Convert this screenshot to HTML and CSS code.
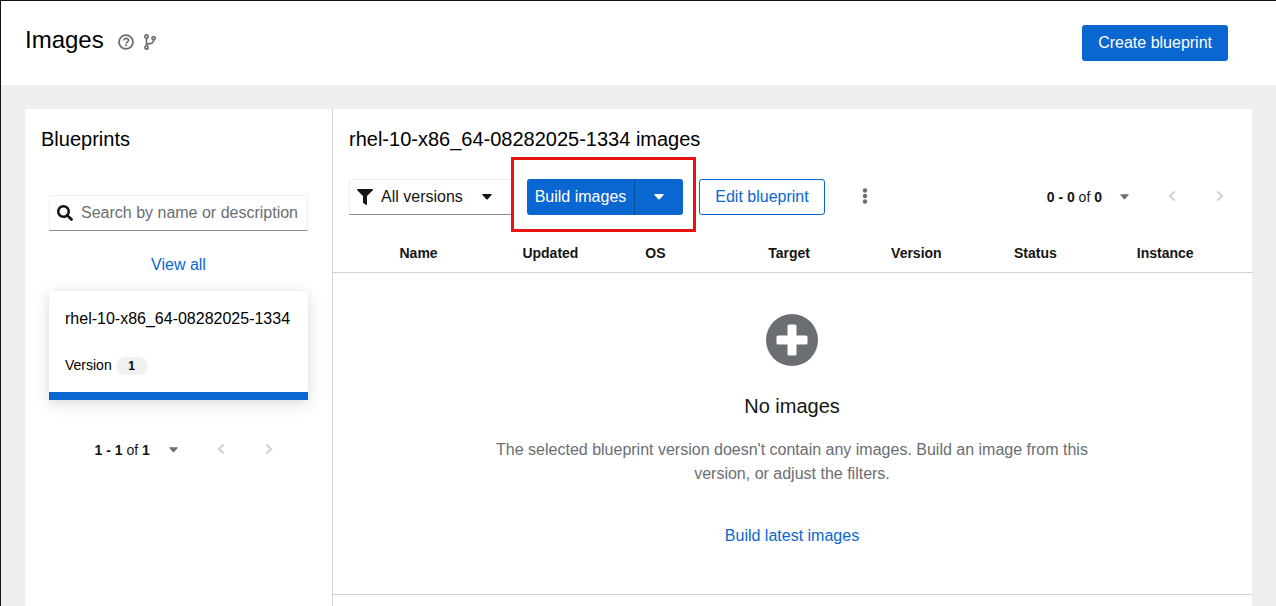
FILE: index.html
```html
<!DOCTYPE html>
<html lang="en">
<head>
<meta charset="utf-8">
<title>Images</title>
<link rel="stylesheet" href="styles.css">
</head>
<body>
<header class="page-header">
  <h1 class="page-title">Images</h1>
  <svg class="help-icon" viewBox="0 0 512 512"><circle cx="256" cy="256" r="223" fill="none" stroke="currentColor" stroke-width="56"/><path d="M182 204c12-48 44-64 76-64 42 0 76 26 76 64 0 54-72 48-74 98" fill="none" stroke="currentColor" stroke-width="52"/><circle cx="258" cy="360" r="36" fill="currentColor"/></svg>
  <svg class="branch-icon" viewBox="0 0 12 16" fill="none" stroke="currentColor" stroke-width="1.7"><circle cx="2.5" cy="2.4" r="1.6"/><circle cx="2.5" cy="13.6" r="1.6"/><circle cx="9.6" cy="4.2" r="1.6"/><path d="M2.5 4v8M9.6 6c0 3.2-1.7 3.3-4 3.700-1.800.3-3.100.9-3.100 2.300"/></svg>
  <button class="btn primary create">Create blueprint</button>
</header>
<div class="content">
  <aside class="sidebar">
    <h2 class="section-title">Blueprints</h2>
    <div class="search">
      <svg class="search-icon" viewBox="0 0 512 512"><path fill="currentColor" d="M505 442.700L405.300 343c-4.500-4.500-10.600-7-17-7H372c27.600-35.300 44-79.700 44-128C416 93.100 322.900 0 208 0S0 93.100 0 208s93.100 208 208 208c48.300 0 92.700-16.400 128-44v16.300c0 6.400 2.500 12.500 7 17l99.700 99.700c9.400 9.400 24.600 9.400 33.900 0l28.300-28.300c9.400-9.400 9.400-24.600.1-34zM208 336c-70.700 0-128-57.200-128-128 0-70.700 57.200-128 128-128 70.700 0 128 57.200 128 128 0 70.700-57.200 128-128 128z"/></svg>
      <span>Search by name or description</span>
    </div>
    <a class="link view-all">View all</a>
    <div class="card">
      <div class="card-name">rhel-10-x86_64-08282025-1334</div>
      <div class="card-version">Version <span class="badge">1</span></div>
    </div>
    <div class="pager">
      <span><b>1 - 1</b> of <b>1</b></span>
      <svg class="caret" viewBox="0 0 10 6"><path d="M.8 0h8.400q1 0 .3.900L5.700 5.200q-.7.700-1.400 0L.5.900Q-.2 0 .8 0z" fill="currentColor"/></svg>
      <svg class="chevron prev" viewBox="0 0 8 12"><path d="M6.500 1.500L2 6l4.500 4.500" fill="none" stroke="currentColor" stroke-width="2.300"/></svg>
      <svg class="chevron next" viewBox="0 0 8 12"><path d="M1.500 1.500L6 6l-4.500 4.500" fill="none" stroke="currentColor" stroke-width="2.300"/></svg>
    </div>
  </aside>
  <main class="main">
    <h2 class="section-title">rhel-10-x86_64-08282025-1334 images</h2>
    <div class="toolbar">
      <div class="filter">
        <svg class="filter-icon" viewBox="0 0 512 512"><path fill="currentColor" d="M487.976 0H24.028C2.710 0-8.047 25.866 7.058 40.971L192 225.941V432c0 7.831 3.821 15.170 10.237 19.662l80 55.980C298.020 518.690 320 507.493 320 487.980V225.941l184.947-184.970C520.021 25.896 509.338 0 487.976 0z"/></svg>
        <span>All versions</span>
        <svg class="caret" viewBox="0 0 10 6"><path d="M.8 0h8.400q1 0 .3.900L5.700 5.200q-.7.700-1.400 0L.5.900Q-.2 0 .8 0z" fill="currentColor"/></svg>
      </div>
      <div class="highlight">
        <button class="btn primary split-main">Build images</button>
        <button class="btn primary split-toggle" aria-label="Options"><svg class="caret" viewBox="0 0 10 6"><path d="M.8 0h8.400q1 0 .3.900L5.700 5.200q-.7.700-1.400 0L.5.900Q-.2 0 .8 0z" fill="currentColor"/></svg></button>
      </div>
      <button class="btn secondary">Edit blueprint</button>
      <svg class="kebab" viewBox="0 0 6 16" fill="currentColor"><circle cx="3" cy="2.500" r="2.200"/><circle cx="3" cy="8" r="2.200"/><circle cx="3" cy="13.500" r="2.200"/></svg>
      <div class="pager">
        <span><b>0 - 0</b> of <b>0</b></span>
        <svg class="caret" viewBox="0 0 10 6"><path d="M.8 0h8.400q1 0 .3.900L5.700 5.200q-.7.700-1.400 0L.5.900Q-.2 0 .8 0z" fill="currentColor"/></svg>
        <svg class="chevron prev" viewBox="0 0 8 12"><path d="M6.500 1.500L2 6l4.500 4.500" fill="none" stroke="currentColor" stroke-width="2.300"/></svg>
        <svg class="chevron next" viewBox="0 0 8 12"><path d="M1.500 1.500L6 6l-4.500 4.500" fill="none" stroke="currentColor" stroke-width="2.300"/></svg>
      </div>
    </div>
    <div class="table-head">
      <span>Name</span><span>Updated</span><span>OS</span><span>Target</span><span>Version</span><span>Status</span><span>Instance</span>
    </div>
    <section class="empty">
      <svg class="plus-icon" viewBox="0 0 52 52"><circle cx="26" cy="26" r="26" fill="#6a6e73"/><path d="M23 10.500h6q1.500 0 1.500 1.500v9.500H40q1.500 0 1.500 1.500v6q0 1.500-1.500 1.500h-9.500V40q0 1.500-1.500 1.500h-6q-1.500 0-1.500-1.500v-9.500H12q-1.500 0-1.500-1.500v-6q0-1.500 1.500-1.500h9.500V12q0-1.500 1.500-1.500z" fill="#fff"/></svg>
      <h2 class="empty-title">No images</h2>
      <p class="empty-text">The selected blueprint version doesn't contain any images. Build an image from this version, or adjust the filters.</p>
      <a class="link">Build latest images</a>
    </section>
  </main>
</div>
</body>
</html>
```
FILE: styles.css
```css
* { box-sizing: border-box; }
body {
  margin: 0;
  height: 606px;
  overflow: hidden;
  display: flex;
  flex-direction: column;
  border-top: 1px solid #11121a;
  border-left: 1px solid #11121a;
  background: #efefef;
  color: #151515;
  font: 16px/24px "Liberation Sans", Arial, sans-serif;
}
h1, h2, p { margin: 0; font-weight: 400; }
svg { display: block; flex: none; }
.page-header {
  flex: none;
  display: flex;
  align-items: center;
  height: 84px;
  padding: 0 48px 0 24px;
  background: #fff;
}
.page-title { color: #000; font-size: 24px; line-height: 32px; padding-bottom: 6px; }
.help-icon { width: 16px; height: 16px; margin: 0 0 2px 14px; color: #6a6e73; }
.branch-icon { width: 12px; height: 16px; margin: 0 0 2px 10px; color: #6a6e73; }
.btn {
  height: 36px;
  padding: 0 16px;
  border: 0;
  border-radius: 3px;
  font: inherit;
  white-space: nowrap;
}
.primary { background: #0a66d0; color: #fff; }
.secondary { width: 126px; background: #fff; color: #0a66d0; border: 1px solid #0a66d0; padding: 0; }
.create { margin-left: auto; }
.link { color: #0a66d0; }
.content { flex: 1; display: flex; margin: 24px 24px 0; min-height: 0; }
.sidebar {
  width: 308px;
  flex: none;
  display: flex;
  flex-direction: column;
  background: #fff;
  border-right: 1px solid #d2d2d2;
}
.section-title { padding: 16px 16px 0; color: #000; font-size: 20px; line-height: 28px; }
.search {
  display: flex;
  align-items: center;
  gap: 8px;
  height: 36px;
  margin: 42px 24px 0;
  padding-left: 7px;
  border: 1px solid #f0f0f0;
  border-bottom-color: #8a8d90;
  color: #6a6e73;
  white-space: nowrap;
}
.search-icon { width: 16px; height: 16px; color: #151515; }
.view-all { margin-top: 22px; text-align: center; padding-right: 48px; padding-left: 48px; }
.card {
  height: 109px;
  margin: 14px 24px 0;
  padding: 16px 16px 0;
  border-bottom: 8px solid #0a66d0;
  box-shadow: 0 4px 16px rgba(3, 3, 3, .13), 0 0 6px rgba(3, 3, 3, .05);
  color: #000;
  white-space: nowrap;
}
.card-version { display: flex; align-items: center; gap: 4px; margin-top: 22px; font-size: 14px; }
.badge {
  width: 32px;
  height: 18px;
  margin-top: 2px;
  border-radius: 9px;
  background: #f0f0f0;
  font-size: 12px;
  font-weight: 700;
  line-height: 18px;
  text-align: center;
}
.pager { display: flex; align-items: center; font-size: 14px; height: 24px; white-space: nowrap; }
.sidebar .pager { margin: 38px 0 0 69.5px; }
.pager .caret { width: 9px; margin-left: 19px; color: #6a6e73; }
.caret { width: 10px; height: 6px; }
.chevron { width: 8px; height: 12px; margin-bottom: 2px; color: #d2d2d2; }
.prev { margin-left: 39px; }
.next { margin-left: 40px; }
.main { flex: 1; min-width: 0; background: #fff; }
.toolbar { display: flex; align-items: center; height: 78px; margin-top: 5px; }
.filter {
  display: flex;
  align-items: center;
  width: 162px;
  height: 36px;
  margin-left: 16px;
  padding-left: 7px;
  border: 1px solid #f0f0f0;
  border-bottom-color: #8a8d90;
  border-right: 0;
  white-space: nowrap;
}
.filter-icon { width: 16px; height: 16px; margin-right: 8px; }
.filter .caret { margin-left: 19px; }
.highlight {
  display: flex;
  align-items: center;
  width: 185px;
  height: 75px;
  margin-bottom: 5px;
  padding: 5px 0 0 13px;
  border: 3px solid #e81313;
}
.split-main { width: 107px; padding: 0; border-radius: 3px 0 0 3px; }
.split-toggle {
  display: flex;
  align-items: center;
  justify-content: center;
  width: 49px;
  padding: 0;
  border-left: 1px solid #004d99;
  border-radius: 0 3px 3px 0;
}
.toolbar .secondary { margin-left: 3px; }
.kebab { width: 6px; height: 16px; margin: 0 0 2px 37px; color: #6a6e73; }
.toolbar .pager { margin: 0 28px 0 auto; }
.toolbar .pager .caret { margin-left: 18px; }
.table-head {
  display: grid;
  grid-template-columns: repeat(7, 122.9px);
  height: 37px;
  margin-right: -1px;
  padding-left: 66.5px;
  overflow: hidden;
  border-bottom: 1px solid #d2d2d2;
  font-size: 14px;
  font-weight: 700;
  line-height: 34px;
}
.empty {
  display: flex;
  flex-direction: column;
  align-items: center;
  height: 322px;
  margin-right: -1px;
  padding: 41px 2px 0 0;
  border-bottom: 1px solid #d2d2d2;
}
.plus-icon { width: 52px; height: 52px; }
.empty-title { margin-top: 25px; font-size: 20px; line-height: 30px; }
.empty-text { width: 600px; margin: 17px 0 38px; color: #6a6e73; text-align: center; }
```
